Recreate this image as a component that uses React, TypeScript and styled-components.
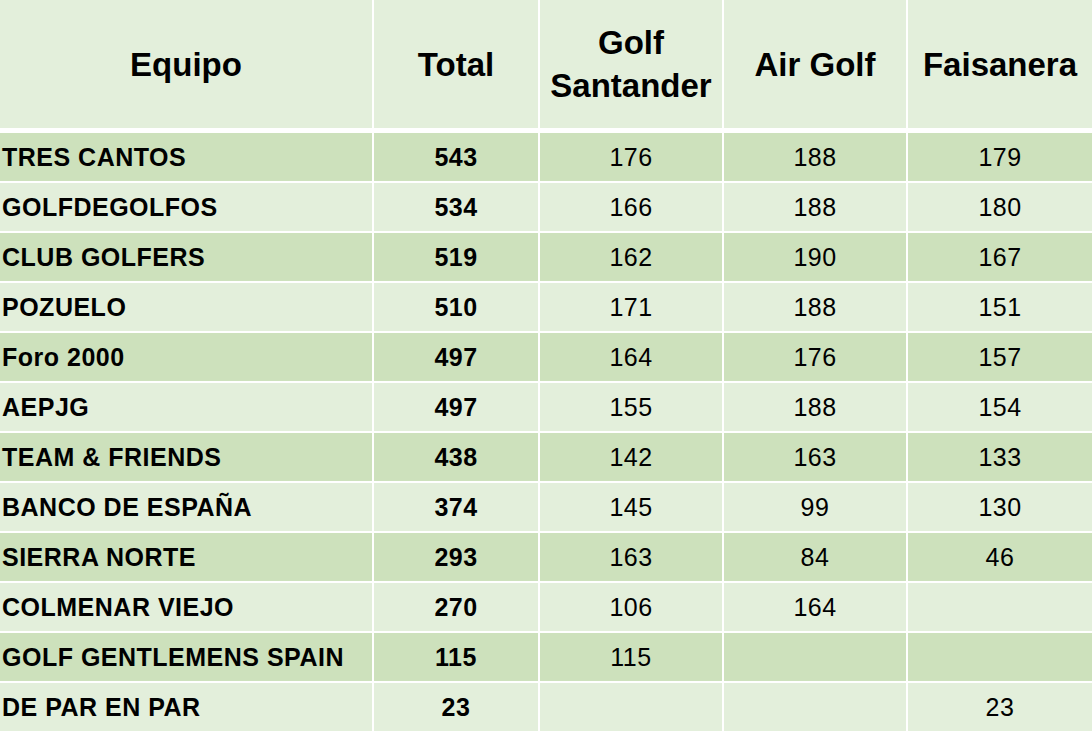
import React from "react";
import styled, { createGlobalStyle } from "styled-components";

const GlobalStyle = createGlobalStyle`
  html, body {
    margin: 0;
    padding: 0;
    background: #ffffff;
  }
  body {
    font-family: "Liberation Sans", Arial, Helvetica, sans-serif;
    color: #000;
  }
`;

const COLS = "372px 164px 182px 182px 184px";

const Table = styled.div`
  width: 1092px;
  display: flex;
  flex-direction: column;
  gap: 2px;
  background: #ffffff;
`;

const HeaderRow = styled.div`
  display: grid;
  grid-template-columns: ${COLS};
  column-gap: 2px;
  height: 128px;
  margin-bottom: 3px;
`;

const HeaderCell = styled.div`
  background: #e3efdb;
  display: flex;
  align-items: center;
  justify-content: center;
  text-align: center;
  font-weight: 700;
  font-size: 33px;
  line-height: 43px;
`;

const Row = styled.div`
  display: grid;
  grid-template-columns: ${COLS};
  column-gap: 2px;
  height: 48px;
`;

const Cell = styled.div<{ $shade: boolean; $align?: "left" | "center"; $bold?: boolean }>`
  background: ${(p) => (p.$shade ? "#cde1bc" : "#e3efdb")};
  display: flex;
  align-items: center;
  justify-content: ${(p) => (p.$align === "left" ? "flex-start" : "center")};
  padding-left: ${(p) => (p.$align === "left" ? "2px" : "0")};
  font-size: 25px;
  letter-spacing: 0.5px;
  font-weight: ${(p) => (p.$bold ? 700 : 400)};
  white-space: nowrap;
`;

type Team = { name: string; total: string; santander: string; air: string; fais: string };

const teams: Team[] = [
  { name: "TRES CANTOS", total: "543", santander: "176", air: "188", fais: "179" },
  { name: "GOLFDEGOLFOS", total: "534", santander: "166", air: "188", fais: "180" },
  { name: "CLUB GOLFERS", total: "519", santander: "162", air: "190", fais: "167" },
  { name: "POZUELO", total: "510", santander: "171", air: "188", fais: "151" },
  { name: "Foro 2000", total: "497", santander: "164", air: "176", fais: "157" },
  { name: "AEPJG", total: "497", santander: "155", air: "188", fais: "154" },
  { name: "TEAM & FRIENDS", total: "438", santander: "142", air: "163", fais: "133" },
  { name: "BANCO DE ESPAÑA", total: "374", santander: "145", air: "99", fais: "130" },
  { name: "SIERRA NORTE", total: "293", santander: "163", air: "84", fais: "46" },
  { name: "COLMENAR VIEJO", total: "270", santander: "106", air: "164", fais: "" },
  { name: "GOLF GENTLEMENS SPAIN", total: "115", santander: "115", air: "", fais: "" },
  { name: "DE PAR EN PAR", total: "23", santander: "", air: "", fais: "23" },
];

export default function App() {
  return (
    <>
      <GlobalStyle />
      <Table>
        <HeaderRow>
          <HeaderCell>Equipo</HeaderCell>
          <HeaderCell>Total</HeaderCell>
          <HeaderCell>
            Golf
            <br />
            Santander
          </HeaderCell>
          <HeaderCell>Air Golf</HeaderCell>
          <HeaderCell>Faisanera</HeaderCell>
        </HeaderRow>
        {teams.map((t, i) => {
          const shade = i % 2 === 0;
          return (
            <Row key={t.name}>
              <Cell $shade={shade} $align="left" $bold>
                {t.name}
              </Cell>
              <Cell $shade={shade} $bold>
                {t.total}
              </Cell>
              <Cell $shade={shade}>{t.santander}</Cell>
              <Cell $shade={shade}>{t.air}</Cell>
              <Cell $shade={shade}>{t.fais}</Cell>
            </Row>
          );
        })}
      </Table>
    </>
  );
}
